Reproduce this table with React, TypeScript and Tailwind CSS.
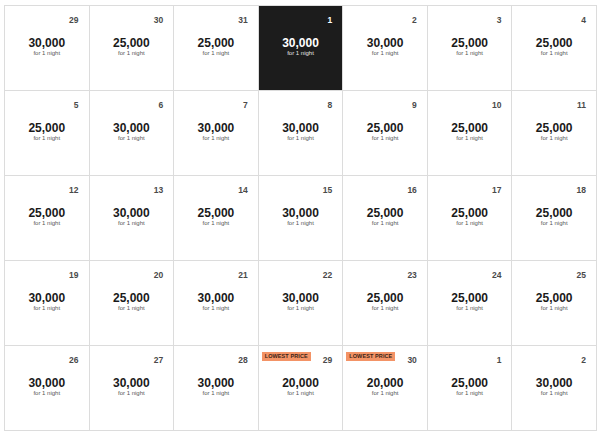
type Day = {
  date: number;
  price: string;
  selected?: boolean;
  lowest?: boolean;
};

const days: Day[] = [
  { date: 29, price: '30,000' },
  { date: 30, price: '25,000' },
  { date: 31, price: '25,000' },
  { date: 1, price: '30,000', selected: true },
  { date: 2, price: '30,000' },
  { date: 3, price: '25,000' },
  { date: 4, price: '25,000' },
  { date: 5, price: '25,000' },
  { date: 6, price: '30,000' },
  { date: 7, price: '30,000' },
  { date: 8, price: '30,000' },
  { date: 9, price: '25,000' },
  { date: 10, price: '25,000' },
  { date: 11, price: '25,000' },
  { date: 12, price: '25,000' },
  { date: 13, price: '30,000' },
  { date: 14, price: '25,000' },
  { date: 15, price: '30,000' },
  { date: 16, price: '25,000' },
  { date: 17, price: '25,000' },
  { date: 18, price: '25,000' },
  { date: 19, price: '30,000' },
  { date: 20, price: '25,000' },
  { date: 21, price: '30,000' },
  { date: 22, price: '30,000' },
  { date: 23, price: '25,000' },
  { date: 24, price: '25,000' },
  { date: 25, price: '25,000' },
  { date: 26, price: '30,000' },
  { date: 27, price: '30,000' },
  { date: 28, price: '30,000' },
  { date: 29, price: '20,000', lowest: true },
  { date: 30, price: '20,000', lowest: true },
  { date: 1, price: '25,000' },
  { date: 2, price: '30,000' },
];

const DayCell: React.FC<{ day: Day }> = ({ day }) => {
  const dark = day.selected;
  return (
    <div
      className={`relative h-[85px] border-r border-b border-[#dcdcdc] flex flex-col ${
        dark ? 'bg-[#1c1c1c]' : 'bg-white'
      }`}
    >
      {/* badge */}
      {day.lowest && (
        <div className="absolute left-[3px] top-[6px] h-[9px] px-[3px] bg-[#f39366] text-[#3a2418] text-[5.5px] leading-[9px] font-bold tracking-[0.1px]">
          LOWEST PRICE
        </div>
      )}
      <div
        className={`pt-[10px] pr-[10px] text-right text-[8.5px] leading-[8px] font-semibold ${
          dark ? 'text-white' : 'text-[#4a4a4a]'
        }`}
      >
        {day.date}
      </div>
      <div
        className={`mt-[13px] text-center text-[12px] leading-[12px] font-bold ${
          dark ? 'text-white' : 'text-[#1a1a1a]'
        }`}
      >
        {day.price}
      </div>
      <div
        className={`mt-[1px] text-center text-[6px] leading-[7px] ${
          dark ? 'text-[#e6e6e6]' : 'text-[#555555]'
        }`}
      >
        for 1 night
      </div>
    </div>
  );
};

export default function App() {
  return (
    <div
      className="w-[600px] h-[434px] bg-white pt-[5px] pl-[4px]"
      style={{ fontFamily: '"Liberation Sans", Arial, sans-serif' }}
    >
      <div className="w-[593px] grid grid-cols-7 border-l border-t border-[#dcdcdc]">
        {days.map((day, i) => (
          <DayCell key={i} day={day} />
        ))}
      </div>
    </div>
  );
}
